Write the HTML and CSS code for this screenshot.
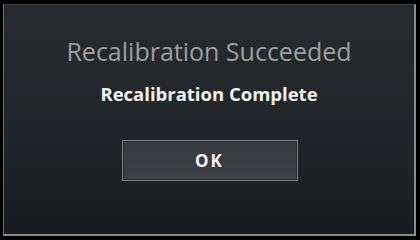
FILE: index.html
```html
<!DOCTYPE html>
<html lang="en">
<head>
    <meta charset="UTF-8">
    <meta name="viewport" content="width=device-width, initial-scale=1.0">
    <title>Recalibration</title>
    <link rel="stylesheet" href="styles.css">
</head>
<body>

    <div class="dialog">
        <h1 class="title">Recalibration Succeeded</h1>
        <p class="message">Recalibration Complete</p>
        <div class="actions">
            <button class="ok-btn">OK</button>
        </div>
    </div>

</body>
</html>
```

FILE: styles.css
```css
html, body {
    margin: 0;
    padding: 0;
    background-color: #000;
}
body {
    width: 420px;
    height: 240px;
    padding: 4px 4px 4px 3px;
    box-sizing: border-box;
    font-family: "Open Sans", "DejaVu Sans", sans-serif;
}
.dialog {
    height: 232px;
    box-sizing: border-box;
    border-top: 1px solid #3c3f41;
    border-left: 1px solid #6d7073;
    border-right: 2px solid #8a8c8e;
    border-bottom: 2px solid #8a8c8e;
    background: linear-gradient(to bottom, #272b2d 0%, #22262a 55%, #181b1d 100%);
    display: flex;
    flex-direction: column;
    align-items: center;
}
.title {
    margin: 31px 0 0;
    font-size: 25px;
    font-weight: 400;
    line-height: 30px;
    color: #9c9fa0;
}
.message {
    margin: 17px 0 0;
    font-size: 18.5px;
    font-weight: 700;
    line-height: 22px;
    color: #f2f2f2;
}
.actions {
    margin-top: 35px;
}
.ok-btn {
    width: 176px;
    height: 41px;
    margin-left: 1px;
    border: 1px solid #7d8082;
    background: linear-gradient(to bottom, #383b3e 0%, #3a3d41 60%, #3f4246 100%);
    box-shadow: inset 0 0 0 1px #2a2d30;
    color: #f4f4f4;
    font-family: "Open Sans", "DejaVu Sans", sans-serif;
    font-size: 17px;
    font-weight: 700;
    letter-spacing: 2px;
    cursor: pointer;
}
```
